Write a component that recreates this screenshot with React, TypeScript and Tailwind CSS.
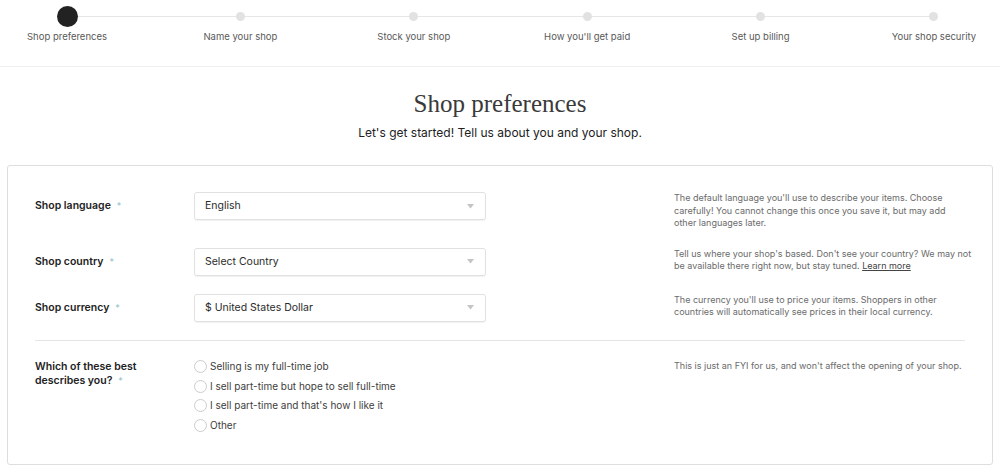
const steps = [
  "Shop preferences",
  "Name your shop",
  "Stock your shop",
  "How you'll get paid",
  "Set up billing",
  "Your shop security",
];

function Chevron() {
  return (
    <svg width="7" height="5" viewBox="0 0 7 5" className="shrink-0">
      <path d="M0 0h7L3.5 4.5z" fill="#c4c4c4" />
    </svg>
  );
}

function Select({ value }: { value: string }) {
  return (
    <div className="flex h-[28px] items-center justify-between rounded-[3px] border border-[#e1e1e1] pl-[10px] pr-[11px] text-[10.5px] text-[#2b2b2b] shadow-[0_1px_1px_rgba(0,0,0,0.06)]">
      <span>{value}</span>
      <Chevron />
    </div>
  );
}

function Label({ children }: { children: React.ReactNode }) {
  return (
    <div className="text-[10.5px] font-semibold leading-[14px] text-[#222]">
      {children}
      <span className="ml-[6px] align-top text-[9px] font-normal text-[#8fc0c8]">*</span>
    </div>
  );
}

const rows = [
  {
    label: "Shop language",
    value: "English",
    help: (
      <>
        The default language you'll use to describe your items. Choose
        <br />
        carefully! You cannot change this once you save it, but may add
        <br />
        other languages later.
      </>
    ),
  },
  {
    label: "Shop country",
    value: "Select Country",
    help: (
      <>
        Tell us where your shop's based. Don't see your country? We may not
        <br />
        be available there right now, but stay tuned.{" "}
        <span className="text-[#444] underline">Learn more</span>
      </>
    ),
  },
  {
    label: "Shop currency",
    value: "$ United States Dollar",
    help: (
      <>
        The currency you'll use to price your items. Shoppers in other
        <br />
        countries will automatically see prices in their local currency.
      </>
    ),
  },
];

const options = [
  "Selling is my full-time job",
  "I sell part-time but hope to sell full-time",
  "I sell part-time and that's how I like it",
  "Other",
];

export default function App() {
  return (
    <div className="min-h-[472px] bg-white font-['Inter',sans-serif]">
      <header className="h-[67px] border-b border-[#efefef]">
        <div className="relative flex justify-between pl-[22px] pr-[21px] pt-[6px]">
          <div className="absolute left-[67px] right-[66px] top-[16px] h-px bg-[#e6e6e6]" />
          {steps.map((s, i) => (
            <div key={s} className="relative flex w-[90px] flex-col items-center">
              <div className="flex h-[21px] items-center">
                {i === 0 ? (
                  <div className="h-[21px] w-[21px] rounded-full bg-[#222]" />
                ) : (
                  <div className="h-[9px] w-[9px] rounded-full bg-[#e2e2e2]" />
                )}
              </div>
              <div className="mt-[3px] whitespace-nowrap text-[9.5px] leading-[14px] text-[#595959]">
                {s}
              </div>
            </div>
          ))}
        </div>
      </header>

      <div className="pt-[22px] text-center">
        <h1 className="font-['Liberation_Serif',serif] text-[25px] font-normal leading-[30px] text-[#3a3a3a]">
          Shop preferences
        </h1>
        <p className="mt-[6px] text-[12px] leading-[16px] text-[#222]">
          Let's get started! Tell us about you and your shop.
        </p>
      </div>

      <div className="mx-[7px] mt-[24px] h-[300px] rounded-[3px] border border-[#dedede] px-[27px] pt-[26px]">
        <div className="flex flex-col gap-[18px]">
          {rows.map((r) => (
            <div key={r.label} className="grid grid-cols-[159px_292px_1fr]">
              <div className="flex h-[28px] items-center">
                <Label>{r.label}</Label>
              </div>
              <Select value={r.value} />
              <p className="-mr-[20px] ml-[188px] whitespace-nowrap text-[9px] leading-[12.5px] text-[#6b6b6b]">
                {r.help}
              </p>
            </div>
          ))}
        </div>

        <div className="mt-[18px] h-px bg-[#e4e4e4]" />

        <div className="grid grid-cols-[159px_292px_1fr] pt-[19px]">
          <div className="pr-[40px]">
            <Label>Which of these best describes you?</Label>
          </div>
          <div className="flex flex-col gap-[5.7px]">
            {options.map((o) => (
              <div key={o} className="flex h-[14px] items-center gap-[3px] text-[10px] text-[#3d3d3d]">
                <span className="h-[13px] w-[13px] shrink-0 rounded-full border border-[#cccccc]" />
                <span>{o}</span>
              </div>
            ))}
          </div>
          <p className="-mr-[5px] ml-[188px] text-[9px] leading-[12.5px] text-[#6b6b6b]">
            This is just an FYI for us, and won't affect the opening of your shop.
          </p>
        </div>
      </div>
    </div>
  );
}
